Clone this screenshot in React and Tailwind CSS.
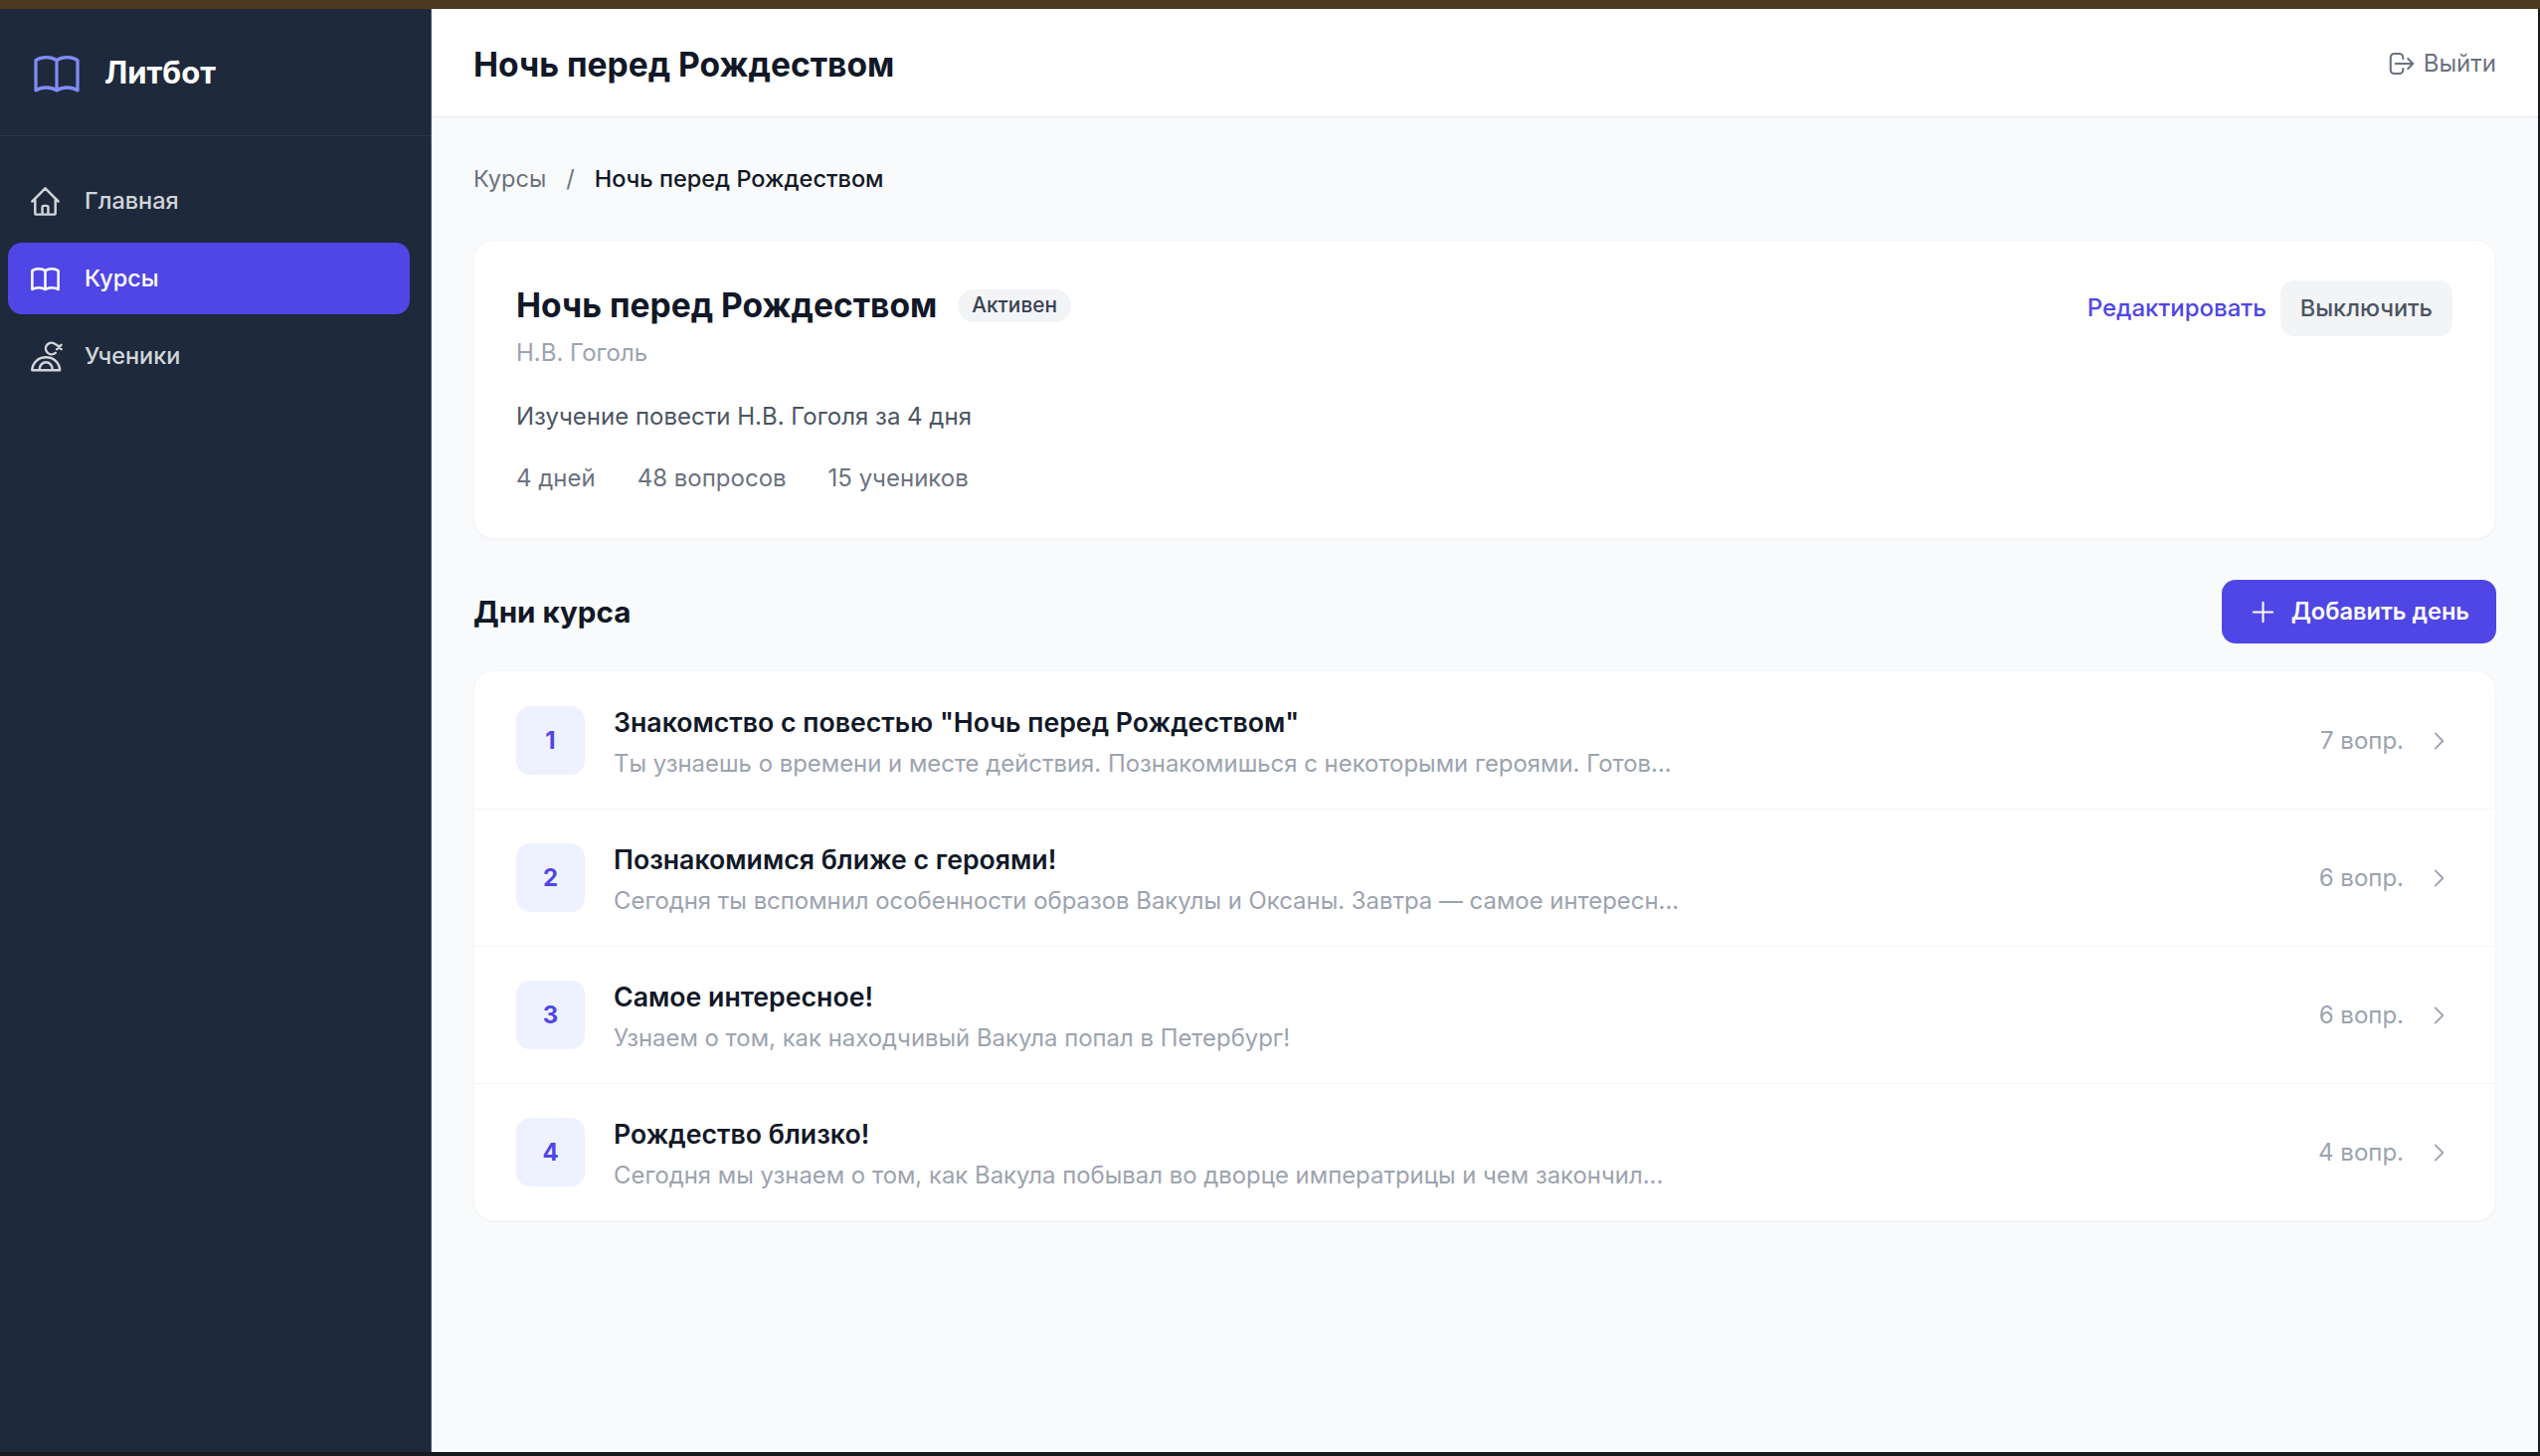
const days = [
  { n: 1, title: 'Знакомство с повестью "Ночь перед Рождеством"', text: "Ты узнаешь о времени и месте действия. Познакомишься с некоторыми героями. Готов...", count: "7 вопр." },
  { n: 2, title: "Познакомимся ближе с героями!", text: "Сегодня ты вспомнил особенности образов Вакулы и Оксаны. Завтра — самое интересн...", count: "6 вопр." },
  { n: 3, title: "Самое интересное!", text: "Узнаем о том, как находчивый Вакула попал в Петербург!", count: "6 вопр." },
  { n: 4, title: "Рождество близко!", text: "Сегодня мы узнаем о том, как Вакула побывал во дворце императрицы и чем закончил...", count: "4 вопр." },
];

const paths = {
  home: "M3 12l2-2m0 0l7-7 7 7M5 10v10a1 1 0 001 1h3m10-11l2 2m-2-2v10a1 1 0 01-1 1h-3m-6 0a1 1 0 001-1v-4a1 1 0 011-1h2a1 1 0 011 1v4a1 1 0 001 1m-6 0h6",
  book: "M12 6.253v13m0-13C10.832 5.477 9.246 5 7.5 5S4.168 5.477 3 6.253v13C4.168 18.477 5.754 18 7.5 18s3.332.477 4.5 1.253m0-13C13.168 5.477 14.754 5 16.5 5c1.747 0 3.332.477 4.5 1.253v13C19.832 18.477 18.247 18 16.5 18c-1.746 0-3.332.477-4.5 1.253",
  students: "M3 21.5c0-5 4-9 9.5-9s9.5 4 9.5 9zM8 21c0-3 2-5 4.5-5s4.5 2 4.5 5M19 3.5a4 4 0 100 6M20 4l3 3m0-3l-3 3",
  logout: "M17 16l4-4m0 0l-4-4m4 4H7m6 4v1a3 3 0 01-3 3H6a3 3 0 01-3-3V7a3 3 0 013-3h4a3 3 0 013 3v1",
  plus: "M12 4v16m8-8H4",
  chevron: "M9 5l7 7-7 7",
};

const Icon = ({ name, className, width = 1.7 }) => (
  <svg className={className} fill="none" viewBox="0 0 24 24" stroke="currentColor" strokeWidth={width} strokeLinecap="round" strokeLinejoin="round">
    <path d={paths[name]} />
  </svg>
);

const nav = [
  { label: "Главная", icon: "home" },
  { label: "Курсы", icon: "book", active: true },
  { label: "Ученики", icon: "students" },
];

export default function App() {
  return (
    <div className="w-[2554px] h-[1464px] flex flex-col overflow-hidden bg-[#17191c] font-['Inter',sans-serif] pr-[2px] pb-[4px]">
      <div className="h-[9px] -mr-[2px] shrink-0 bg-[#4f3820]" />

      <div className="flex flex-1 min-h-0">
        {/* Sidebar */}
        <aside className="w-[434px] shrink-0 bg-[#1e293b] border-r border-[#4b5563]">
          <div className="h-[128px] flex items-center gap-[20px] pl-[29px] pt-[2px] border-b border-[#2c3748]">
            <Icon name="book" className="w-[56px] h-[56px] text-[#818cf8] shrink-0" width={1.4} />
            <span className="text-[31px] font-bold text-white">Литбот</span>
          </div>
          <nav className="pt-[29px] pl-[8px] pr-[21px] flex flex-col gap-[6px]">
            {nav.map((item) => (
              <a
                key={item.label}
                className={`h-[72px] rounded-[14px] flex items-center gap-[22px] pl-[20px] text-[23.5px] font-medium ${
                  item.active ? "bg-[#4f46e5] text-white" : "text-[#d1d5db]"
                }`}
              >
                <Icon name={item.icon} className="w-[35px] h-[35px] shrink-0" />
                {item.label}
              </a>
            ))}
          </nav>
        </aside>

        {/* Main */}
        <main className="flex-1 flex flex-col bg-[#f9fafb]">
          <header className="h-[109px] shrink-0 bg-white border-b border-[#e5e7eb] flex items-center justify-between px-[42px]">
            <h1 className="pt-[4px] text-[33.6px] font-bold text-[#111827]">Ночь перед Рождеством</h1>
            <button className="pt-[2px] flex items-center gap-[7px] text-[24px] text-[#6b7280]">
              <Icon name="logout" className="w-[30px] h-[30px]" />
              Выйти
            </button>
          </header>

          <div className="pt-[48px] px-[42px]">
            <div className="flex items-center text-[23.5px] h-[28px]">
              <span className="text-[#6b7280]">Курсы</span>
              <span className="text-[#6b7280] mx-[20px]">/</span>
              <span className="font-medium text-[#111827]">Ночь перед Рождеством</span>
            </div>

            {/* Course card */}
            <section className="mt-[47px] h-[301px] bg-white rounded-[20px] border border-[#f3f4f6] shadow-[0_1px_2px_rgba(0,0,0,0.03)] pl-[42px] pr-[43px] pt-[40px] flex justify-between">
              <div>
                <div className="flex items-center gap-[21px] h-[50px]">
                  <h2 className="text-[33.6px] font-bold text-[#111827]">Ночь перед Рождеством</h2>
                  <span className="h-[33px] px-[14px] flex items-center rounded-full bg-[#f3f4f6] text-[20.8px] font-medium text-[#374151]">Активен</span>
                </div>
                <div className="mt-[5px] text-[24px] leading-[36px] text-[#9ca3af]">Н.В. Гоголь</div>
                <div className="mt-[28px] text-[24px] leading-[36px] text-[#4b5563]">Изучение повести Н.В. Гоголя за 4 дня</div>
                <div className="mt-[26px] flex gap-[42px] text-[24px] leading-[36px] text-[#6b7280]">
                  <span>4 дней</span>
                  <span>48 вопросов</span>
                  <span>15 учеников</span>
                </div>
              </div>
              <div className="flex items-start gap-[14px]">
                <button className="h-[56px] text-[24px] font-medium text-[#4f46e5]">Редактировать</button>
                <button className="h-[56px] px-[20px] rounded-[14px] bg-[#f3f4f6] text-[23.5px] font-medium text-[#4b5563]">Выключить</button>
              </div>
            </section>

            {/* Days */}
            <div className="mt-[41px] h-[64px] flex items-center justify-between">
              <h3 className="pt-[1px] text-[29.6px] font-bold text-[#111827]">Дни курса</h3>
              <button className="h-[64px] px-[27px] rounded-[14px] bg-[#4f46e5] text-white text-[23.6px] font-semibold flex items-center gap-[14px]">
                <Icon name="plus" className="w-[29px] h-[29px]" />
                Добавить день
              </button>
            </div>

            <div className="mt-[27px] bg-white rounded-[20px] border border-[#f3f4f6] shadow-[0_1px_2px_rgba(0,0,0,0.03)]">
              {days.map((d, i) => (
                <div key={d.n} className={`h-[138px] flex items-center pl-[42px] pr-[44px] border-t ${i > 0 ? "border-[#f3f4f6]" : "border-transparent"}`}>
                  <div className="w-[69px] h-[69px] shrink-0 rounded-[14px] bg-[#eef2ff] flex items-center justify-center text-[#4f46e5] text-[24px] font-bold">{d.n}</div>
                  <div className="ml-[29px] flex-1 pt-[3px]">
                    <div className="text-[26.7px] font-semibold text-[#111827] leading-[36px]">{d.title}</div>
                    <div className="mt-[8px] text-[23.9px] text-[#9ca3af] leading-[32px]">{d.text}</div>
                  </div>
                  <span className="text-[24px] text-[#9ca3af]">{d.count}</span>
                  <Icon name="chevron" className="ml-[22px] w-[26px] h-[26px] text-[#9ca3af]" />
                </div>
              ))}
            </div>
          </div>
        </main>
      </div>
    </div>
  );
}
